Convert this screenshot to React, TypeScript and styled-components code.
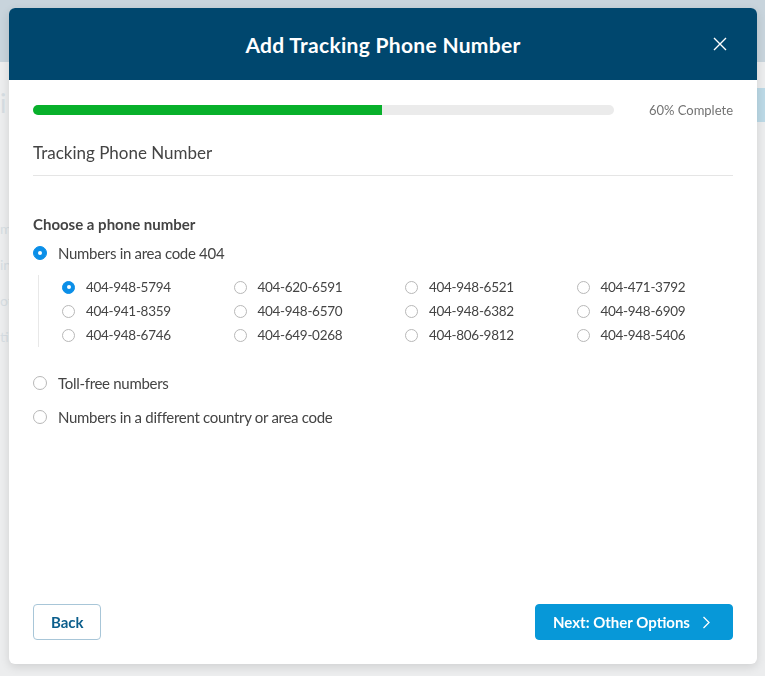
import styled, { createGlobalStyle } from "styled-components";

const GlobalStyle = createGlobalStyle`
  html, body {
    margin: 0;
    padding: 0;
    height: 100%;
  }
  body {
    font-family: Lato, "Noto Sans", sans-serif;
    background: #ecedee;
  }
  #root {
    height: 100%;
  }
`;

const Page = styled.div`
  height: 100%;
  display: flex;
  flex-direction: column;
  background: #ecedee;
  overflow: hidden;
`;

const TopBar = styled.div`
  height: 62px;
  background: #c8d4dc;
  flex: none;
`;

const PageBody = styled.div`
  display: flex;
  justify-content: space-between;
  padding-top: 26px;
`;

const SideNav = styled.div`
  display: flex;
  flex-direction: column;
  font-size: 14px;
  line-height: 18px;
  color: #d6dde2;

  span {
    display: block;
    height: 18px;
    margin-bottom: 18px;
  }

  span:first-child {
    font-size: 26px;
    line-height: 30px;
    height: 30px;
    margin-bottom: 102px;
  }
`;

const GhostButton = styled.div`
  width: 60px;
  height: 34px;
  background: #bcd9e6;
  border-radius: 3px;
  margin-right: -40px;
`;

const Modal = styled.div`
  position: fixed;
  top: 8px;
  left: 9px;
  width: 748px;
  height: 656px;
  background: #fff;
  border-radius: 6px;
  box-shadow: 0 3px 10px rgba(0, 0, 0, 0.12);
  display: flex;
  flex-direction: column;
  overflow: hidden;
`;

const Header = styled.header`
  height: 72px;
  flex: none;
  background: #00476e;
  display: flex;
  align-items: center;
  justify-content: center;
  position: relative;

  h1 {
    margin: 0;
    color: #fff;
    font-size: 21px;
    font-weight: 700;
    letter-spacing: 0.3px;
  }
`;

const CloseButton = styled.button`
  position: absolute;
  right: 30px;
  top: 29px;
  width: 14px;
  height: 14px;
  padding: 0;
  border: 0;
  background: none;
  cursor: pointer;
  display: flex;
`;

const Body = styled.div`
  flex: 1;
  display: flex;
  flex-direction: column;
  padding: 22px 24px 24px;
`;

const ProgressRow = styled.div`
  display: flex;
  align-items: center;
  gap: 35px;
`;

const Track = styled.div`
  flex: 1;
  height: 10px;
  border-radius: 5px;
  background: #ebebeb;
  overflow: hidden;
`;

const Fill = styled.div`
  height: 100%;
  background: #08b02b;
`;

const ProgressLabel = styled.span`
  font-size: 13px;
  color: #737373;
`;

const SectionTitle = styled.h2`
  margin: 24px 0 0;
  padding-bottom: 12px;
  border-bottom: 1px solid #e5e5e5;
  font-size: 17px;
  font-weight: 400;
  color: #444;
`;

const Question = styled.h3`
  margin: 39px 0 8px;
  font-size: 15px;
  font-weight: 700;
  color: #444;
`;

const OptionList = styled.div`
  display: flex;
  flex-direction: column;
`;

const Option = styled.label<{ $gap?: number }>`
  display: flex;
  align-items: center;
  gap: 11px;
  height: 24px;
  margin-top: ${(p) => p.$gap ?? 0}px;
  font-size: 15px;
  letter-spacing: -0.3px;
  color: #444;
  cursor: pointer;
`;

const Radio = styled.span<{ $checked?: boolean; $size?: number }>`
  flex: none;
  box-sizing: border-box;
  width: ${(p) => p.$size ?? 14}px;
  height: ${(p) => p.$size ?? 14}px;
  border-radius: 50%;
  border: 1px solid ${(p) => (p.$checked ? "#0b8fe8" : "#b8b8b8")};
  background: ${(p) => (p.$checked ? "#0b8fe8" : "#fff")};
  display: flex;
  align-items: center;
  justify-content: center;

  &::after {
    content: "";
    width: 4px;
    height: 4px;
    border-radius: 50%;
    background: #fff;
    display: ${(p) => (p.$checked ? "block" : "none")};
  }
`;

const SubGroup = styled.div`
  margin: 10px 0 0 5px;
  padding-left: 23px;
  border-left: 1px solid #e8e8e8;
  display: grid;
  grid-template-columns: repeat(4, 171.5px);
  height: 72px;
`;

const NumberOption = styled.label`
  display: flex;
  align-items: center;
  gap: 11px;
  height: 24px;
  font-size: 13.5px;
  letter-spacing: -0.3px;
  color: #444;
  cursor: pointer;
`;

const Footer = styled.div`
  margin-top: auto;
  display: flex;
  justify-content: space-between;
  align-items: center;
`;

const Button = styled.button<{ $variant?: "primary" | "secondary" }>`
  height: 36px;
  box-sizing: border-box;
  border-radius: 4px;
  font-family: inherit;
  font-size: 15px;
  font-weight: 700;
  display: flex;
  align-items: center;
  cursor: pointer;
  ${(p) =>
    p.$variant === "primary"
      ? `
    background: #0798d8;
    border: 1px solid #0798d8;
    color: #fff;
    padding: 0 17px;
    gap: 12px;
    width: 198px;
  `
      : `
    background: #fff;
    border: 1px solid #a8c6d8;
    color: #0b5e8c;
    padding: 0 17px;
    width: 68px;
  `}
`;

const numbers = [
  "404-948-5794",
  "404-620-6591",
  "404-948-6521",
  "404-471-3792",
  "404-941-8359",
  "404-948-6570",
  "404-948-6382",
  "404-948-6909",
  "404-948-6746",
  "404-649-0268",
  "404-806-9812",
  "404-948-5406",
];

export default function App() {
  const progress = 60;

  return (
    <>
      <GlobalStyle />
      <Page>
        <TopBar />
        <PageBody>
          <SideNav>
            <span>i</span>
            <span>m</span>
            <span>in</span>
            <span>ot</span>
            <span>ti</span>
          </SideNav>
          <GhostButton />
        </PageBody>
      </Page>
      <Modal>
        <Header>
          <h1>Add Tracking Phone Number</h1>
          <CloseButton aria-label="Close">
            <svg width="14" height="14" viewBox="0 0 14 14">
              <path d="M1 1L13 13M13 1L1 13" stroke="#fff" strokeWidth="1.4" />
            </svg>
          </CloseButton>
        </Header>
        <Body>
          <ProgressRow>
            <Track>
              <Fill style={{ width: `${progress}%` }} />
            </Track>
            <ProgressLabel>{progress}% Complete</ProgressLabel>
          </ProgressRow>
          <SectionTitle>Tracking Phone Number</SectionTitle>
          <Question>Choose a phone number</Question>
          <OptionList>
            <Option>
              <Radio $checked />
              Numbers in area code 404
            </Option>
            <SubGroup>
              {numbers.map((n, i) => (
                <NumberOption key={n}>
                  <Radio $checked={i === 0} $size={13} />
                  {n}
                </NumberOption>
              ))}
            </SubGroup>
            <Option $gap={24}>
              <Radio />
              Toll-free numbers
            </Option>
            <Option $gap={10}>
              <Radio />
              Numbers in a different country or area code
            </Option>
          </OptionList>
          <Footer>
            <Button type="button">Back</Button>
            <Button type="button" $variant="primary">
              Next: Other Options
              <svg width="8" height="13" viewBox="0 0 8 13">
                <path d="M1.5 1L7 6.5L1.5 12" fill="none" stroke="#fff" strokeWidth="1.3" />
              </svg>
            </Button>
          </Footer>
        </Body>
      </Modal>
    </>
  );
}
